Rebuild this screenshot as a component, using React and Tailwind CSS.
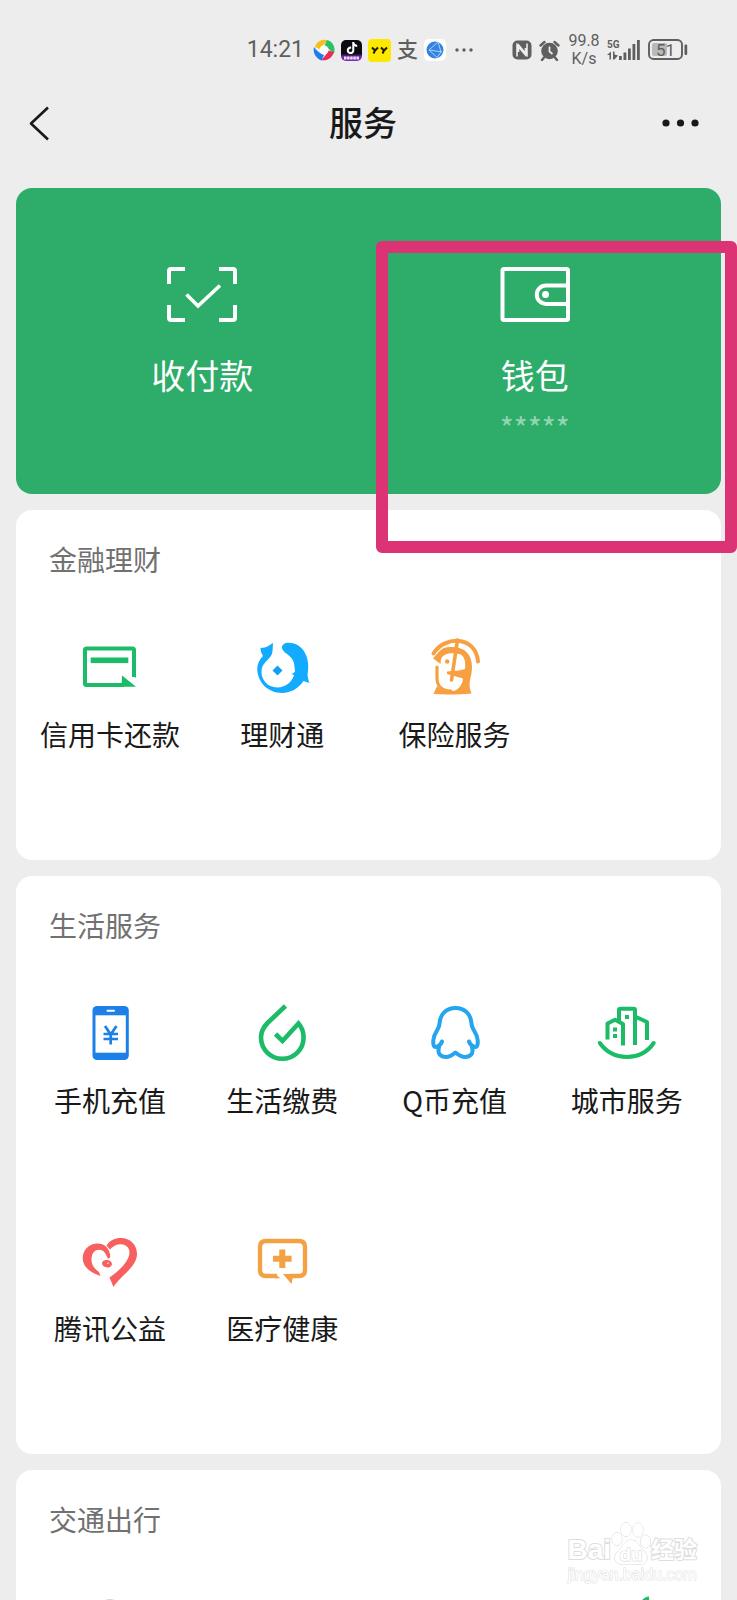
import React from "react";
import { SiTiktok } from "react-icons/si";

/* ---------- status bar ---------- */

function StatusBar() {
  return (
    <div className="flex h-[100px] shrink-0 items-center justify-end pr-[49px] text-[#5f5f5f]">
      <span className="font-[Roboto,sans-serif] text-[23px] leading-6">14:21</span>
      <div className="ml-[9px] flex items-center gap-[6px]">
        <svg className="size-[22px]" viewBox="0 0 22 22">
          <path d="M2 8C4 2 10 -0.500 14.500 1.500C12 4 10 6 7 10Z" fill="#f9bf16" />
          <path d="M14 1C19.500 2.500 23 8 21 14.500C18.500 12.500 15 9 11.500 6.500Z" fill="#2bc267" />
          <path d="M21 13C19.500 18.500 14 22.500 8 21C11 18.500 13.500 15 15.500 11.500Z" fill="#ee2b55" />
          <path d="M8.500 21.500C3 19.500 -0.500 14 1 8C3 11.500 7 14.500 11 16Z" fill="#1d7cf2" />
          <circle cx="11" cy="11" r="4.500" fill="#fff" />
        </svg>
        <div className="flex size-[21px] flex-col items-center overflow-hidden rounded-[5px] bg-linear-to-b from-[#0b0b14] from-65% to-[#7a2bb5] to-80%">
          <SiTiktok className="mt-[2px] size-3 shrink-0 text-white" />
          <svg className="mt-[2px] h-1 w-[15px] shrink-0" viewBox="0 0 15 4">
            <path d="M0 2H15" stroke="#fff" strokeWidth="3" strokeDasharray="2.500 .6" opacity=".85" />
          </svg>
        </div>
        <svg className="h-[23px] w-[23px]" viewBox="0 0 23 23">
          <rect width="23" height="23" rx="4" fill="#fde900" />
          <path d="M4 8.500L7 11.500L10 8.500M7 11.500L5.500 14.500M13 8.500L16 11.500L19 8.500M16 11.500L14.500 14.500" fill="none" stroke="#1d1a00" strokeWidth="2" />
        </svg>
        <span className="-mt-1 w-[21px] font-['Noto_Sans_CJK_SC',sans-serif] text-[21px] leading-6 font-medium">支</span>
        <svg className="size-[22px]" viewBox="0 0 22 22">
          <rect width="22" height="22" rx="5" fill="#fff" />
          <circle cx="11" cy="11" r="8.500" fill="#3583e0" />
          <path d="M14 3L5 11L13 18.500M5 11L18.500 13M14 3L17 13L13 18.500" fill="none" stroke="#a9d3fb" strokeWidth="1" />
        </svg>
      </div>
      <svg className="ml-[9px] h-1 w-[18px]" viewBox="0 0 18 4" fill="currentColor">
        <circle cx="2" cy="2" r="1.700" />
        <circle cx="9" cy="2" r="1.700" />
        <circle cx="16" cy="2" r="1.700" />
      </svg>
      <svg className="ml-[39px] size-5" viewBox="0 0 20 20">
        <rect x=".5" y=".5" width="19" height="19" rx="5" fill="currentColor" />
        <path d="M5 16.500V5L13.500 15V8M15 3.500V15L6.500 5V12" fill="none" stroke="#ededed" strokeWidth="1.600" />
      </svg>
      <svg className="ml-[7px] size-[21px]" viewBox="0 0 21 21">
        <circle cx="10.500" cy="11" r="8.300" fill="currentColor" />
        <path d="M1.500 5.500L5.500 2M19.500 5.500L15.500 2M5 17.500L3 20M16 17.500L18 20" stroke="currentColor" strokeWidth="2.400" strokeLinecap="round" />
        <path d="M10.500 6.500V11.500L13.500 14" fill="none" stroke="#ededed" strokeWidth="1.700" />
      </svg>
      <div className="ml-2 flex w-8 flex-col items-center font-[Roboto,sans-serif] text-base leading-[18px]">
        <span>99.8</span>
        <span>K/s</span>
      </div>
      <svg className="ml-[7px] h-[22px] w-[34px]" viewBox="0 0 34 22" fill="currentColor">
        <text x="0" y="9" fontFamily="Roboto, sans-serif" fontWeight="700" fontSize="10">5G</text>
        <path d="M0 16L4 12.500V20.500H2.500V16ZM6 12.500H7.500V15.500L11 16.500L7.500 20.500H6Z" />
        <rect x="12" y="17" width="2.800" height="4" />
        <rect x="16.500" y="13.500" width="2.800" height="7.500" />
        <rect x="21" y="9.500" width="2.800" height="11.500" />
        <rect x="25.500" y="5" width="2.800" height="16" />
        <rect x="30" y="1" width="2.800" height="20" />
      </svg>
      <svg className="ml-[7px] h-[22px] w-10" viewBox="0 0 40 22">
        <rect x="4" y="4" width="15" height="13" rx="2" fill="#b9b9b9" />
        <rect x="1" y="1" width="33" height="19" rx="4.500" fill="none" stroke="currentColor" strokeWidth="1.900" />
        <rect x="36.500" y="5.500" width="2.700" height="10.500" rx="1" fill="currentColor" />
        <text x="17.500" y="16.500" textAnchor="middle" fill="currentColor" fontFamily="Roboto, sans-serif" fontWeight="400" fontSize="17">51</text>
      </svg>
    </div>
  );
}

/* ---------- service icons ---------- */

function Icon({ children }) {
  return (
    <svg className="size-16" viewBox="0 0 64 64" fill="none" aria-hidden="true">
      {children}
    </svg>
  );
}

const CardIcon = () => (
  <Icon>
    <path d="M56 42V15Q56 13.500 54.500 13.500H8.500Q7 13.500 7 15V48.500Q7 50 8.500 50H46" stroke="#1bbb67" strokeWidth="4" />
    <path d="M44 40.500L58 51.800H43.500Z" fill="#1bbb67" />
    <path d="M54 39.500L58 43V39.500Z" fill="#1bbb67" />
    <rect x="12.700" y="22.500" width="37.600" height="5.600" fill="#1bbb67" />
  </Icon>
);

const WealthIcon = () => (
  <Icon>
    <path d="M23 8C19 10 17 13 10.500 13C10.500 17 12 19 13 21C9 25 7.300 29 7.300 34C7.300 47 18 58 32 58C41 58 49 53 53.500 46L59.500 48C58 45 58 42 57.500 40C60.500 25 55 12 44 8.500C37 6.500 31.500 8.500 32 13C33 19 44.500 20 44.500 32L45 36.500C44 38 43 38.800 41 39C43.500 40 44 40 44 40C42 47.500 35 52.500 27.500 52.500C17 52.500 11 44 11.500 36C12 26 22.500 24 22.500 16Z" fill="#12abff" />
    <path d="M27.500 30.500L32.500 35.500L27.500 40.500L22.500 35.500Z" fill="#12a0f5" />
  </Icon>
);

const InsuranceIcon = () => (
  <Icon>
    <path d="M10.500 18.500C22 0 53 1 55 26.500" stroke="#f7a041" strokeWidth="4" strokeLinecap="round" />
    <path d="M10 23.300C14 20 17 13 24 12.300C40 10 49 18 49 32C49 43 44 47 48.500 58.500C36 59.500 22 59.800 10.500 59L14 51C17 55 24 56.500 30 56C36 55 39.500 49 40 43.500L24 39V36.500L36 35.500L42 34C43 26 41 20 36 19C28 17 20 18.500 18 24L17.500 29C15 27 12 25 10 23.300Z" fill="#f7a041" />
    <path d="M14 32V43C14 51 19 56 28 56" stroke="#f7a041" strokeWidth="3.200" strokeLinecap="round" />
    <path d="M34.500 5L28.500 45" stroke="#f7a041" strokeWidth="3.600" strokeLinecap="round" />
    <circle cx="24.200" cy="26.500" r="2.200" fill="#f7a041" />
  </Icon>
);

const PhoneIcon = () => (
  <Icon>
    <rect x="14.500" y="5" width="36.300" height="54" rx="4.500" fill="#1d80e8" />
    <rect x="17.500" y="14.300" width="30.300" height="37.400" fill="#fff" />
    <path d="M29.500 9.800H36" stroke="#fff" strokeWidth="2" strokeLinecap="round" />
    <path d="M27 25L32.700 33.500L38.500 25M32.700 33.500V43.500M25.500 33H40M25.500 38H40" stroke="#1d80e8" strokeWidth="2.700" />
  </Icon>
);

const DropIcon = () => (
  <Icon>
    <path d="M35.500 5L18 21.500C13.500 26 11 31 11 36.500A21.300 21.300 0 0 0 53.600 36.500C53.600 31 52 26.500 48.500 22.500L32.500 40L25.500 33" stroke="#1bbb67" strokeWidth="4.600" />
  </Icon>
);

const PenguinIcon = () => (
  <Icon>
    <path d="M19 40.500C18 43.500 15 46 12.800 46C10 46 10 41 10.500 38C11.500 31 16.500 28 16.500 22.500C17 13.500 23 7 32.500 7S48 13.500 48.500 22.500C48.500 28 53.500 31 54.500 38C55 41 55 46 52.200 46C50 46 47 43.500 46 40.500M16 46.500C14 53 18 56 23 56C27 56 29.500 54 32.500 51.500C35.500 54 38 56 42 56C47 56 51 53 49 46.500" stroke="#25a5ee" strokeWidth="4" strokeLinejoin="round" strokeLinecap="round" />
  </Icon>
);

const CityIcon = () => (
  <Icon>
    <path d="M4.800 42C18 60.500 46 60.500 58.700 42" stroke="#1bbb67" strokeWidth="4" strokeLinecap="round" />
    <path d="M12.500 38.500V22.500L20 18.800L28 23V44.500M24 20V9Q24 7.800 25.500 7.800H38.500Q40 7.800 40 9V44M41 16L52 21V39" stroke="#1bbb67" strokeWidth="4" strokeLinejoin="round" />
    <path d="M30 14H34V18H30ZM18 26.500H22V30.500H18ZM18 33H22V37H18Z" fill="#1bbb67" />
  </Icon>
);

const HeartIcon = () => (
  <Icon>
    <path d="M32.300 28C32 18 25 14 18.500 14.500C10 15 4.500 22 4.700 29.500C5 38 13 44 22.500 47L21 43C15.500 39 13.500 35 13.500 30.500C13.500 24 17 20.800 21 20.800C26 20.800 28 25 30 30Z" fill="#f85f5f" />
    <path d="M28.500 16.500C32 11 38 8.800 43 9C52 9 59 15.500 59 25C59 38 42 47 35.500 58L31.500 48.500C38 44 51 34 51.500 23.500C51.500 18 47 15 42 15.300C37 15.500 34 18.500 32 20.500Z" fill="#f85f5f" />
    <ellipse cx="29" cy="34.700" rx="5" ry="3.700" transform="rotate(10 29 34.700)" fill="#f85f5f" />
    <path d="M29 34.500L31 33.800" stroke="#fff" strokeWidth="0.800" />
  </Icon>
);

const MedicalIcon = () => (
  <Icon>
    <path d="M27 47H16Q10 47 10 41V18Q10 12 16 12H49Q55 12 55 18V41Q55 47 49 47H40" stroke="#f3a143" strokeWidth="4.300" />
    <path d="M25 44.900L30.500 49.200H25ZM33 44.900H43.500L41.500 55Z" fill="#f3a143" />
    <path d="M32.300 20.500V39M23 29.700H41.600" stroke="#f3a143" strokeWidth="6" />
  </Icon>
);

const TransitIcon = () => (
  <Icon>
    <circle cx="32" cy="30" r="24" stroke="#5fb9b4" strokeWidth="3" />
  </Icon>
);

const LeafIcon = () => (
  <Icon>
    <path d="M54 3C48 4 46 10 40 18C30 24 14 28 14 42C14 52 24 56 32 56" stroke="#1bbb67" strokeWidth="3.600" />
  </Icon>
);

/* ---------- data ---------- */

const sections = [
  {
    title: "金融理财",
    items: [
      { label: "信用卡还款", Art: CardIcon },
      { label: "理财通", Art: WealthIcon },
      { label: "保险服务", Art: InsuranceIcon },
    ],
  },
  {
    title: "生活服务",
    items: [
      { label: "手机充值", Art: PhoneIcon },
      { label: "生活缴费", Art: DropIcon },
      { label: "Q币充值", Art: PenguinIcon },
      { label: "城市服务", Art: CityIcon },
      { label: "腾讯公益", Art: HeartIcon },
      { label: "医疗健康", Art: MedicalIcon },
    ],
  },
];

const sectionClass = "shrink-0 rounded-2xl bg-white px-2 pb-[106px]";
const headingClass = "px-[25px] pt-[29px] pb-14 text-[28px] leading-10 text-[#717171]";

function Section({ title, items }) {
  return (
    <section className={sectionClass}>
      <h2 className={headingClass}>{title}</h2>
      <div className="grid grid-cols-4 gap-y-[109px]">
        {items.map(({ label, Art }) => (
          <button key={label} type="button" className="flex flex-col items-center gap-[15px] whitespace-nowrap text-[28px] leading-10 text-[#191919]">
            <Art />
            <span>{label}</span>
          </button>
        ))}
      </div>
    </section>
  );
}

function PayPanel() {
  return (
    <section className="grid h-[306px] shrink-0 grid-cols-2 rounded-2xl bg-[#2dad69] px-5 text-white">
      <button type="button" className="flex flex-col items-center pt-[79px]">
        <svg className="h-14 w-[72px]" viewBox="0 0 72 56" fill="none" stroke="currentColor" strokeWidth="4">
          <path d="M3 17V4Q3 2 5 2H19M53 2H67Q69 2 69 4V17M69 38V51Q69 53 67 53H53M19 53H5Q3 53 3 51V38" />
          <path d="M20.500 27.500L32 39L54 18.500" strokeWidth="3.600" />
        </svg>
        <span className="mt-7 text-[34px] leading-[48px]">收付款</span>
      </button>
      <div className="relative flex">
        <button type="button" className="flex flex-1 flex-col items-center pt-[79px]">
          <svg className="h-14 w-[72px]" viewBox="0 0 72 56" fill="none" stroke="currentColor" strokeWidth="4">
            <rect x="3.500" y="2" width="65.500" height="51" rx="1.500" />
            <path d="M69 18.500H47A9.200 9.200 0 0 0 47 36.900H69" />
            <circle cx="46.500" cy="27.500" r="3.500" fill="currentColor" stroke="none" />
          </svg>
          <span className="mt-7 text-[34px] leading-[48px]">钱包</span>
          <span className="mt-1 text-[30px] leading-[48px] text-[#93d5b2]">*****</span>
        </button>
        <div className="pointer-events-none absolute top-[53px] -right-9 left-[7px] h-[312px] rounded-md border-12 border-[#db3373]" />
      </div>
    </section>
  );
}

function Watermark() {
  return (
    <div className="pointer-events-none absolute right-10 bottom-4 flex flex-col items-center font-['Liberation_Sans','Noto_Sans_CJK_SC',sans-serif] text-white [paint-order:stroke] [-webkit-text-stroke:2px_#dedede]">
      <div className="flex items-end text-[28px] leading-8 font-bold">
        <span>Bai</span>
        <svg className="h-11 w-10" viewBox="0 0 40 44" fill="#fff" stroke="#d6d6d6" strokeWidth="1">
          <ellipse cx="6" cy="17" rx="5" ry="6.500" />
          <ellipse cx="15" cy="7.500" rx="5" ry="7" />
          <ellipse cx="27" cy="8" rx="5" ry="7" />
          <ellipse cx="34.500" cy="19.500" rx="5" ry="6.500" />
          <path d="M20 18C27 18 28 25 33 29C39 35 36 43 28 42.500C23 42 17 42 12 42.500C4 43 1 35 7 29C12 25 13 18 20 18Z" />
          <text x="20" y="39" textAnchor="middle" fontFamily="Liberation Sans, sans-serif" fontSize="19" fontWeight="700" style={{ WebkitTextStroke: "0px" }}>du</text>
        </svg>
        <span className="text-[23px]">经验</span>
      </div>
      <span className="text-base leading-[18px] [-webkit-text-stroke:1px_#dedede]">jingyan.baidu.com</span>
    </div>
  );
}

export default function App() {
  return (
    <div className="relative h-screen overflow-hidden bg-[#ededed] font-['Noto_Sans_CJK_SC',sans-serif]">
      <div className="flex h-full flex-col overflow-y-auto [scrollbar-width:none]">
        <StatusBar />
        <header className="flex h-12 shrink-0 items-center justify-between pr-[38px] pl-7 text-[#191919]">
          <button type="button" aria-label="返回" className="w-9">
            <svg className="h-9 w-6" viewBox="0 0 24 36" fill="none" stroke="currentColor" strokeWidth="2.600">
              <path d="M20 1.500L3 17.500L20 33.500" strokeLinejoin="round" />
            </svg>
          </button>
          <h1 className="-mt-1 text-[34px] leading-[48px] font-medium">服务</h1>
          <button type="button" aria-label="更多">
            <svg className="h-9 w-[37px]" viewBox="0 0 37 36" fill="currentColor">
              <circle cx="4" cy="17" r="3.600" />
              <circle cx="18.500" cy="17" r="3.600" />
              <circle cx="33" cy="17" r="3.600" />
            </svg>
          </button>
        </header>
        <main className="flex flex-col gap-4 px-4 pt-10">
          <PayPanel />
          {sections.map((section) => (
            <Section key={section.title} {...section} />
          ))}
          <section className={sectionClass}>
            <h2 className={headingClass}>交通出行</h2>
            <div className="grid grid-cols-4">
              <div className="flex justify-center"><TransitIcon /></div>
              <div className="col-start-4 flex justify-center"><LeafIcon /></div>
            </div>
          </section>
        </main>
      </div>
      <Watermark />
    </div>
  );
}
